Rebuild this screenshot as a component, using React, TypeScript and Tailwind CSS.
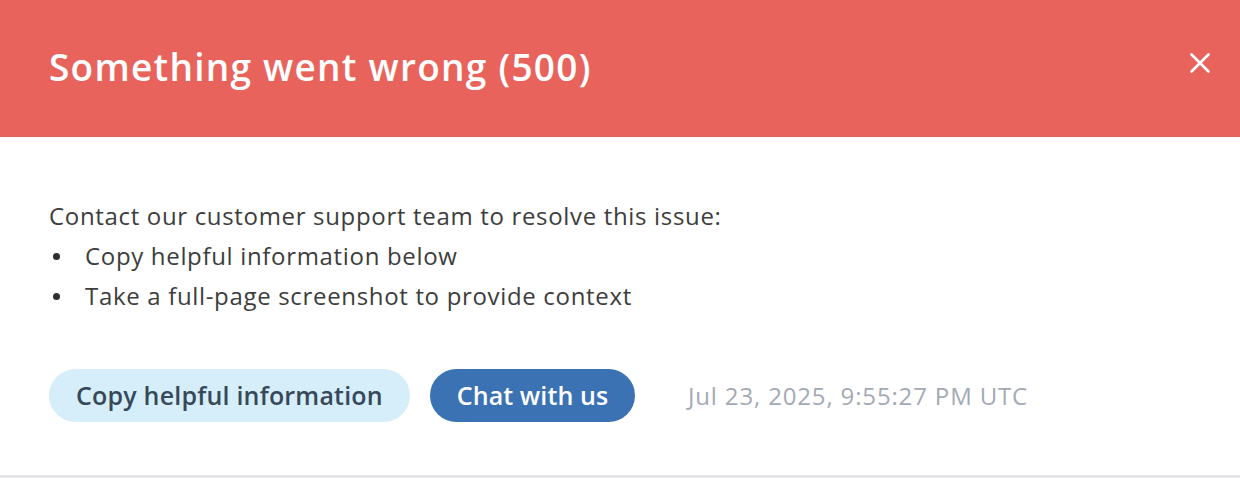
import React from "react";

export default function App() {
  return (
    <div className="w-[1240px] h-[478px] bg-white flex flex-col overflow-hidden" style={{ fontFamily: '"Open Sans", "Noto Sans", sans-serif' }}>
      <div className="h-[137px] bg-[#e8635c] flex items-center justify-between pl-[49px] pr-[28px] shrink-0">
        <h1 className="text-white text-[37px] font-semibold tracking-[1.25px] leading-none pb-[4px]">Something went wrong (500)</h1>
        <button className="w-[24px] h-[24px] flex items-center justify-center text-white mb-[12px]" aria-label="Close">
          <svg width="24" height="24" viewBox="0 0 24 24" fill="none" stroke="currentColor" strokeWidth="2.6" strokeLinecap="round">
            <path d="M3.5 3.5L20.5 20.5M20.5 3.5L3.5 20.5" />
          </svg>
        </button>
      </div>
      <div className="flex-1 flex flex-col pl-[49px] pt-[58px]">
        <p className="text-[24px] leading-[41px] text-[#3d3d3d] tracking-[0.67px]">Contact our customer support team to resolve this issue:</p>
        <ul className="text-[24px] leading-[40px] text-[#3d3d3d] tracking-[0.67px]">
          <li className="flex items-center">
            <span className="w-[7px] h-[7px] rounded-full bg-[#2f2f2f] ml-[4px] mr-[25px]" />
            Copy helpful information below
          </li>
          <li className="flex items-center">
            <span className="w-[7px] h-[7px] rounded-full bg-[#2f2f2f] ml-[4px] mr-[25px]" />
            Take a full-page screenshot to provide context
          </li>
        </ul>
        <div className="flex items-center mt-[53px]">
          <button className="h-[53px] w-[361px] rounded-full bg-[#d6eef9] text-[#36495b] text-[25px] font-semibold tracking-[0.2px] flex items-center justify-center">
            Copy helpful information
          </button>
          <button className="ml-[20px] h-[53px] w-[205px] rounded-full bg-[#3b72b4] text-white text-[25px] font-semibold tracking-[0.1px] flex items-center justify-center">
            Chat with us
          </button>
          <span className="ml-[53px] text-[24px] text-[#a3aab5] tracking-[0.85px]">Jul 23, 2025, 9:55:27 PM UTC</span>
        </div>
      </div>
      <div className="h-[3px] bg-[#e6e6ea] shrink-0" />
    </div>
  );
}
